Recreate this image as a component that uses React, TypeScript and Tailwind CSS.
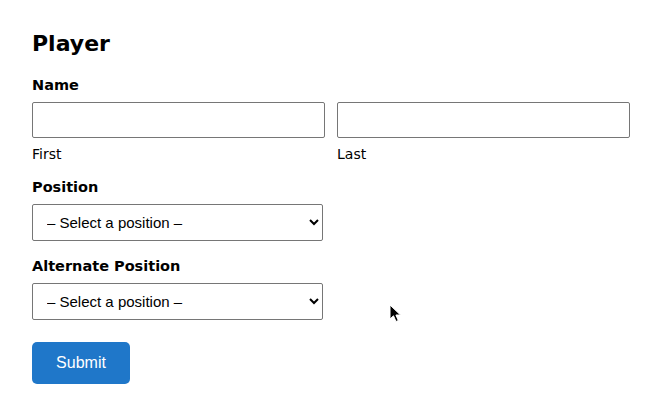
export default function App() {
  return (
    <div className="relative h-[420px] w-[660px] bg-white text-black" style={{ fontFamily: '"DejaVu Sans", "Noto Sans", sans-serif' }}>
      <form className="pl-8 pr-[30px] pt-[28px]" onSubmit={(e) => e.preventDefault()}>
        <h1 className="text-[22px] font-bold leading-[32px]">Player</h1>

        <div className="mt-[15px] text-[14.5px] font-bold leading-5">Name</div>
        <div className="mt-[7px] flex gap-3">
          <label className="flex-1">
            <input type="text" className="block h-9 w-full rounded-[2px] border border-[#767676] px-2" />
            <span className="mt-[6px] block text-[14px] leading-5">First</span>
          </label>
          <label className="flex-1">
            <input type="text" className="block h-9 w-full rounded-[2px] border border-[#767676] px-2" />
            <span className="mt-[6px] block text-[14px] leading-5">Last</span>
          </label>
        </div>

        <label className="mt-[13px] block">
          <span className="block text-[14.5px] font-bold leading-5">Position</span>
          <select
            className="mt-[7px] block h-[37px] w-[291px] rounded-[2px] border border-[#767676] bg-white pl-[10px] text-[15px]"
            style={{ fontFamily: '"Liberation Sans", Arial, sans-serif' }}
          >
            <option>– Select a position –</option>
          </select>
        </label>

        <label className="mt-[15px] block">
          <span className="block text-[14.5px] font-bold leading-5">Alternate Position</span>
          <select
            className="mt-[7px] block h-[37px] w-[291px] rounded-[2px] border border-[#767676] bg-white pl-[10px] text-[15px]"
            style={{ fontFamily: '"Liberation Sans", Arial, sans-serif' }}
          >
            <option>– Select a position –</option>
          </select>
        </label>

        <button
          type="submit"
          className="mt-[22px] h-[42px] w-[98px] rounded-[5px] bg-[#1f77c9] text-[16px] text-white"
          style={{ fontFamily: '"Liberation Sans", Arial, sans-serif' }}
        >
          Submit
        </button>
      </form>

      <svg className="absolute left-[389px] top-[304px]" width="14" height="20" viewBox="0 0 14 20">
        <path d="M1 1 L1 15 L4.5 11.8 L7 17.5 L9.3 16.5 L6.9 11 L11.5 11 Z" fill="#000" stroke="#fff" strokeWidth="1" />
      </svg>
    </div>
  );
}
